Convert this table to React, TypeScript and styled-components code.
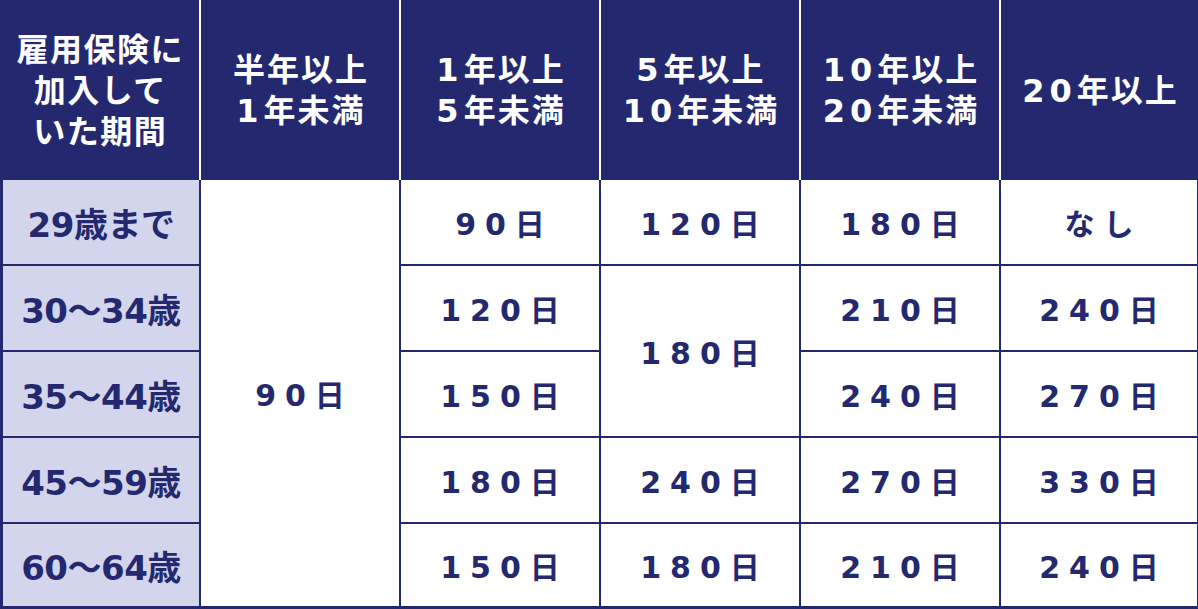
import React from "react";
import styled, { createGlobalStyle } from "styled-components";

const NAVY = "#24296f";
const LAVENDER = "#d3d5ec";

const GlobalStyle = createGlobalStyle`
  html, body {
    margin: 0;
    padding: 0;
    background: #ffffff;
  }
  body {
    font-family: "Noto Sans CJK JP", "Noto Sans", sans-serif;
  }
`;

const Table = styled.div`
  width: 1198px;
  display: flex;
  flex-direction: column;
`;

const HeaderRow = styled.div`
  display: grid;
  grid-template-columns: 199px 198px 198px 198px 198px 197px;
  column-gap: 2px;
  height: 180px;
  background: #ffffff;
`;

const HeadCell = styled.div<{ $spacing?: number }>`
  background: ${NAVY};
  color: #ffffff;
  display: flex;
  align-items: center;
  justify-content: center;
  text-align: center;
  white-space: pre-line;
  font-family: "DejaVu Sans", "Noto Sans CJK JP", sans-serif;
  font-weight: 700;
  font-size: 32px;
  line-height: 41px;
  letter-spacing: ${(p) => p.$spacing ?? 2}px;
  padding: 2px 0 0 ${(p) => p.$spacing ?? 2}px;
`;

const Digits = styled.span`
  letter-spacing: 5px;
`;

const Body = styled.div`
  display: grid;
  grid-template-columns: 196px 198px 198px 198px 198px 196px;
  grid-template-rows: 84px 84px 84px 84px 82px;
  gap: 2px;
  padding: 0 1px 3px 3px;
  background: ${NAVY};
`;

const AgeCell = styled.div<{ $row: number }>`
  grid-column: 1;
  grid-row: ${(p) => p.$row};
  background: ${LAVENDER};
  color: ${NAVY};
  display: flex;
  align-items: center;
  justify-content: center;
  font-family: "DejaVu Sans", "Noto Sans CJK JP", sans-serif;
  font-weight: 700;
  font-size: 34px;
  letter-spacing: -0.5px;
`;

const DayCell = styled.div<{ $col: number; $row: number; $span?: number }>`
  grid-column: ${(p) => p.$col};
  grid-row: ${(p) => p.$row} / span ${(p) => p.$span ?? 1};
  background: #ffffff;
  color: ${NAVY};
  display: flex;
  align-items: center;
  justify-content: center;
  font-family: "DejaVu Sans", "Noto Sans CJK JP", sans-serif;
  font-weight: 700;
  font-size: 30px;
  letter-spacing: 9px;
  padding-left: 9px;
`;

type Head = { lines: { num?: string; text: string }[]; spacing?: number };

const headers: Head[] = [
  { lines: [{ text: "雇用保険に" }, { text: "加入して" }, { text: "いた期間" }], spacing: 1.5 },
  { lines: [{ text: "半年以上" }, { num: "1", text: "年未満" }] },
  { lines: [{ num: "1", text: "年以上" }, { num: "5", text: "年未満" }] },
  { lines: [{ num: "5", text: "年以上" }, { num: "10", text: "年未満" }] },
  { lines: [{ num: "10", text: "年以上" }, { num: "20", text: "年未満" }] },
  { lines: [{ num: "20", text: "年以上" }] },
];

const ages = ["29歳まで", "30〜34歳", "35〜44歳", "45〜59歳", "60〜64歳"];

type Day = { col: number; row: number; span?: number; text: string };

const days: Day[] = [
  { col: 2, row: 1, span: 5, text: "90日" },
  { col: 3, row: 1, text: "90日" },
  { col: 3, row: 2, text: "120日" },
  { col: 3, row: 3, text: "150日" },
  { col: 3, row: 4, text: "180日" },
  { col: 3, row: 5, text: "150日" },
  { col: 4, row: 1, text: "120日" },
  { col: 4, row: 2, span: 2, text: "180日" },
  { col: 4, row: 4, text: "240日" },
  { col: 4, row: 5, text: "180日" },
  { col: 5, row: 1, text: "180日" },
  { col: 5, row: 2, text: "210日" },
  { col: 5, row: 3, text: "240日" },
  { col: 5, row: 4, text: "270日" },
  { col: 5, row: 5, text: "210日" },
  { col: 6, row: 1, text: "なし" },
  { col: 6, row: 2, text: "240日" },
  { col: 6, row: 3, text: "270日" },
  { col: 6, row: 4, text: "330日" },
  { col: 6, row: 5, text: "240日" },
];

export default function App() {
  return (
    <>
      <GlobalStyle />
      <Table>
        <HeaderRow>
          {headers.map((h, i) => (
            <HeadCell key={i} $spacing={h.spacing}>
              <div>
                {h.lines.map((l, j) => (
                  <div key={j}>
                    {l.num && <Digits>{l.num}</Digits>}
                    {l.text}
                  </div>
                ))}
              </div>
            </HeadCell>
          ))}
        </HeaderRow>
        <Body>
          {ages.map((a, i) => (
            <AgeCell key={a} $row={i + 1}>
              {a}
            </AgeCell>
          ))}
          {days.map((d) => (
            <DayCell key={`${d.col}-${d.row}`} $col={d.col} $row={d.row} $span={d.span}>
              {d.text}
            </DayCell>
          ))}
        </Body>
      </Table>
    </>
  );
}
